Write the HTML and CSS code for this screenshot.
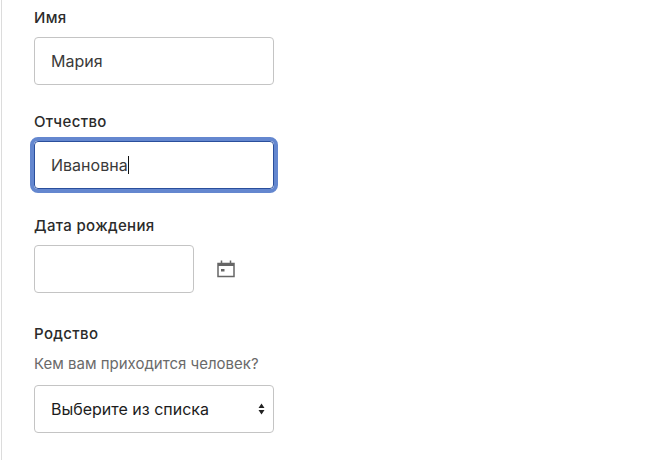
FILE: index.html
```html
<!DOCTYPE html>
<html lang="ru">
<head>
<meta charset="utf-8">
<title>Форма</title>
<link rel="stylesheet" href="styles.css">
</head>
<body>
<main class="page">
  <form class="form">
    <div class="field">
      <label class="label">Имя</label>
      <div class="control">Мария</div>
    </div>
    <div class="field">
      <label class="label">Отчество</label>
      <div class="control focused">Ивановна<span class="caret"></span></div>
    </div>
    <div class="field date-field">
      <label class="label">Дата рождения</label>
      <div class="date-row">
        <div class="control short"></div>
        <svg class="calendar" width="20" height="18" viewBox="0 0 20 18" aria-hidden="true">
          <path d="M2 3.500h16v13H2z" fill="none" stroke="#666" stroke-width="1.5"/>
          <path d="M2 3h16v3H2z" fill="#666"/>
          <path d="M5.500 .5v3.500M14.500 .5v3.500" stroke="#666" stroke-width="1.5"/>
          <path d="M5 9h3.500v2.500H5z" fill="#666"/>
        </svg>
      </div>
    </div>
    <div class="field">
      <label class="label">Родство</label>
      <p class="hint">Кем вам приходится человек?</p>
      <div class="control select">
        <span>Выберите из списка</span>
        <svg class="arrows" width="7" height="12" viewBox="0 0 7 12" aria-hidden="true">
          <path d="M3.500 .5 6.500 5H.5zM.5 7h6l-3 4.500z" fill="#222"/>
        </svg>
      </div>
    </div>
    <div class="field"><label class="label">&nbsp;</label></div>
  </form>
</main>
</body>
</html>
```

FILE: styles.css
```css
html, body {
  margin: 0;
  height: 100%;
  overflow: hidden;
  background: #fff;
}
.page {
  height: 460px;
  margin-left: 1px;
  border-left: 1px solid #dcdcdc;
  padding: 6px 0 0 32px;
  font-family: Inter, "Noto Sans", sans-serif;
  font-size: 15px;
  color: #222;
}
.form {
  display: flex;
  flex-direction: column;
  gap: 25px;
}
.field {
  display: flex;
  flex-direction: column;
  gap: 7px;
  width: 240px;
}
.label {
  font-size: 15px;
  line-height: 24px;
  font-weight: 500;
  letter-spacing: .35px;
  color: #2b2b2b;
}
.control {
  box-sizing: border-box;
  display: flex;
  align-items: center;
  height: 48px;
  padding: 0 16px;
  font-size: 16px;
  background: #fff;
  border: 1px solid #c4c4c4;
  border-radius: 4px;
  color: #3a3a3a;
}
.focused {
  border-color: #2a4f9c;
  outline: 4px solid #6487cf;
  outline-offset: 0;
}
.caret {
  width: 1px;
  height: 18px;
  background: #111;
}
.date-row {
  display: flex;
  align-items: center;
  gap: 22px;
}
.short {
  width: 160px;
  flex: none;
}
.calendar {
  flex: none;
}
.date-field {
  margin-bottom: 4px;
}
.hint {
  margin: -1px 0 2px;
  line-height: 24px;
  color: #6a6a6a;
}
.select {
  justify-content: space-between;
  padding-right: 8px;
  color: #1c1c1c;
}
.arrows {
  flex: none;
}
```
